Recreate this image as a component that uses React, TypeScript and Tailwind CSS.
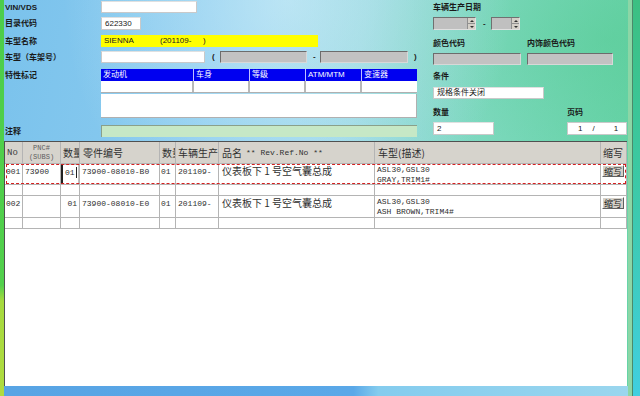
import React from "react";

const cols = "grid-cols-[18px_38px_19px_80px_16px_43px_156px_226px_26px]";

function Label({ children }: { children: React.ReactNode }) {
  return (
    <span className="block text-[8px] font-bold leading-[9px] text-[#1a1a1a] whitespace-nowrap">
      {children}
    </span>
  );
}

function WhiteBox({ w, h = "h-[12px]", children }: { w: string; h?: string; children?: React.ReactNode }) {
  return (
    <div
      className={`${w} ${h} flex items-center bg-white border border-[#c9c9c9] border-t-[#e0e0e0] pl-[3px] text-[8px] leading-none text-[#202020] whitespace-nowrap`}
    >
      {children}
    </div>
  );
}

function GrayBox({ w }: { w: string }) {
  return (
    <div className={`${w} h-[12px] bg-[#c2c2c2] border border-[#6c6c6c] border-b-[#d8d8d8] border-r-[#d8d8d8]`} />
  );
}

function Spinner({ w }: { w: string }) {
  return (
    <div className={`${w} h-[13px] flex bg-[#c0c0c0] border border-[#707070] border-b-[#e0e0e0] border-r-[#e0e0e0]`}>
      <div className="flex-1" />
      <div className="w-[8px] flex flex-col border-l border-[#909090]">
        <div className="flex-1 flex items-center justify-center bg-[#d4d0c8] border-b border-[#909090]">
          <div className="w-0 h-0 border-l-[2px] border-r-[2px] border-b-[2px] border-l-transparent border-r-transparent border-b-[#303030]" />
        </div>
        <div className="flex-1 flex items-center justify-center bg-[#d4d0c8]">
          <div className="w-0 h-0 border-l-[2px] border-r-[2px] border-t-[2px] border-l-transparent border-r-transparent border-t-[#303030]" />
        </div>
      </div>
    </div>
  );
}

function FormRow({ mt, h, top, label, children }: { mt: string; h: string; top?: boolean; label: string; children: React.ReactNode }) {
  return (
    <div className={`${mt} ${h} flex ${top ? "items-start" : "items-center"}`}>
      <div className={`w-[96px] ${top ? "pt-[2px]" : ""}`}>
        <Label>{label}</Label>
      </div>
      {children}
    </div>
  );
}

function SmallButton() {
  return (
    <div className="w-[22px] h-[12px] flex items-center justify-center bg-[#d4d0c8] border border-t-white border-l-white border-b-[#606060] border-r-[#606060] font-['Noto_Sans_CJK_SC',sans-serif] text-[9px] leading-none text-[#202020]">
      缩写
    </div>
  );
}

const cell = "border-r border-b border-[#b4b4b4] overflow-hidden whitespace-nowrap";
const mono = "font-['Liberation_Mono','Noto_Sans_CJK_SC',monospace] text-[8px] leading-[10px] text-[#303030]";
const cjk = "font-['Noto_Sans_CJK_SC',sans-serif] text-[10px] leading-[12px] text-[#303030]";

function Record({
  no,
  pnc,
  qty,
  editing,
  part,
  date,
  line1,
  line2,
  h,
}: {
  no: string;
  pnc: string;
  qty: string;
  editing?: boolean;
  part: string;
  date: string;
  line1: string;
  line2: string;
  h: string;
}) {
  return (
    <>
      <div className={`${cell} ${h} ${mono} pl-[1px] pt-[3px]`}>{no}</div>
      <div className={`${cell} ${h} ${mono} pl-[2px] pt-[3px]`}>{pnc}</div>
      <div className={`${cell} ${h} ${mono}`}>
        {editing ? (
          <div className="h-full flex items-start pt-[3px] pl-[2px] border-l-[2px] border-l-[#202020] border-t border-t-[#c0c0c0] border-r border-r-[#c0c0c0]">
            {qty}
            <span className="ml-[1px] mt-[-1px] w-px h-[11px] bg-[#202020]" />
          </div>
        ) : (
          <div className="pt-[3px] pr-[2px] text-right">{qty}</div>
        )}
      </div>
      <div className={`${cell} ${h} ${mono} pl-[2px] pt-[3px]`}>{part}</div>
      <div className={`${cell} ${h} ${mono} pl-[1px] pt-[3px]`}>01</div>
      <div className={`${cell} ${h} ${mono} pl-[2px] pt-[3px]`}>{date}</div>
      <div className={`${cell} ${h} ${cjk} pl-[3px] pt-[1px]`}>仪表板下 1 号空气囊总成</div>
      <div className={`${cell} ${h} ${mono} leading-[9px] pl-[2px] pt-[1px]`}>
        <div>{line1}</div>
        <div>{line2}</div>
      </div>
      <div className={`${cell} ${h} pl-[1px] pt-[1px]`}>
        <SmallButton />
      </div>
    </>
  );
}

function Spacer() {
  return (
    <>
      {Array.from({ length: 9 }).map((_, i) => (
        <div key={i} className={`${cell} h-[11px]`} />
      ))}
    </>
  );
}

export default function App() {
  return (
    <div className="w-[640px] h-[396px] overflow-hidden flex text-[8px] leading-none font-['Liberation_Sans','Noto_Sans_CJK_SC',sans-serif] bg-[radial-gradient(ellipse_at_45%_0%,rgba(215,242,250,0.6),transparent_45%),radial-gradient(ellipse_at_95%_10%,rgba(80,200,140,0.5),transparent_40%),linear-gradient(100deg,#7ac2ec_0%,#8acbef_30%,#9ad7ea_52%,#86dcc8_72%,#62d3a4_100%)]">
      {/* left edge strip */}
      <div className="w-[4px] h-full bg-[linear-gradient(180deg,#4ccd4a_0%,#52d04c_72%,#a6da3e_76%,#b0dc40_100%)]" />

      <div className="w-[624px] flex flex-col">
        {/* form */}
        <div className="h-[141px] flex">
          <div className="w-[429px] pl-[1px] flex flex-col">
            <FormRow mt="mt-[1px]" h="h-[12px]" label="VIN/VDS">
              <WhiteBox w="w-[96px]" />
            </FormRow>
            <FormRow mt="mt-[4px]" h="h-[13px]" label="目录代码">
              <WhiteBox w="w-[40px]" h="h-[13px]">622330</WhiteBox>
            </FormRow>
            <FormRow mt="mt-[5px]" h="h-[12px]" label="车型名称">
              <div className="w-[217px] h-[12px] flex items-center bg-[#ffff00] pl-[3px] text-[8px] leading-none text-[#202020] whitespace-nowrap">
                <span className="w-[56px]">SIENNA</span>
                <span className="w-[43px]">(201109-</span>
                <span>)</span>
              </div>
            </FormRow>
            <FormRow mt="mt-[4px]" h="h-[12px]" label="车型（车架号）">
              <WhiteBox w="w-[104px]" />
              <span className="ml-[7px] w-[8px] text-[8px] font-bold text-[#202020]">(</span>
              <GrayBox w="w-[87px]" />
              <span className="ml-[6px] w-[7px] text-[8px] font-bold text-[#202020]">-</span>
              <GrayBox w="w-[88px]" />
              <span className="ml-[6px] text-[8px] font-bold text-[#202020]">)</span>
            </FormRow>
            <FormRow mt="mt-[6px]" h="h-[49px]" top label="特性标记">
              <div className="w-[316px] flex flex-col">
                <div className="flex h-[12px] bg-[#0000f0] text-white text-[8px] leading-none">
                  {[
                    ["w-[93px]", "发动机"],
                    ["w-[56px]", "车身"],
                    ["w-[56px]", "等级"],
                    ["w-[56px]", "ATM/MTM"],
                    ["w-[55px]", "变速器"],
                  ].map(([w, t], i) => (
                    <div key={t} className={`${w} flex items-center pl-[2px] ${i < 4 ? "border-r border-[#c0c0ff]" : ""}`}>
                      {t}
                    </div>
                  ))}
                </div>
                <div className="flex h-[12px] bg-white border-b border-[#b0b0b0]">
                  {["w-[93px]", "w-[56px]", "w-[56px]", "w-[56px]", "w-[55px]"].map((w, i) => (
                    <div key={i} className={`${w} ${i < 4 ? "border-r-2 border-[#b8b8b8]" : ""}`} />
                  ))}
                </div>
                <div className="mt-[1px] h-[24px] bg-white border-r border-b border-[#b0b0b0]" />
              </div>
            </FormRow>
            <FormRow mt="mt-[7px]" h="h-[12px]" label="注释">
              <div className="w-[316px] h-[12px] bg-[#c6e8c6] border-l border-t border-[#8aa08a]" />
            </FormRow>
          </div>

          {/* right form */}
          <div className="flex-1 flex flex-col">
            <div className="h-[17px] pt-[3px]">
              <Label>车辆生产日期</Label>
            </div>
            <div className="h-[13px] flex items-center">
              <Spinner w="w-[43px]" />
              <span className="ml-[7px] w-[8px] text-[8px] font-bold text-[#202020]">-</span>
              <Spinner w="w-[29px]" />
            </div>
            <div className="h-[23px] pt-[9px] flex">
              <div className="w-[94px]">
                <Label>颜色代码</Label>
              </div>
              <Label>内饰颜色代码</Label>
            </div>
            <div className="flex gap-[6px]">
              <GrayBox w="w-[88px]" />
              <GrayBox w="w-[86px]" />
            </div>
            <div className="h-[22px] pt-[7px]">
              <Label>条件</Label>
            </div>
            <WhiteBox w="w-[111px]">规格条件关闭</WhiteBox>
            <div className="h-[23px] pt-[9px] flex">
              <div className="w-[134px]">
                <Label>数量</Label>
              </div>
              <Label>页码</Label>
            </div>
            <div className="flex h-[13px]">
              <WhiteBox w="w-[61px]" h="h-[13px]">2</WhiteBox>
              <div className="ml-[73px] w-[60px] h-[13px] flex items-center bg-white border border-[#c9c9c9] text-[8px] leading-none text-[#202020]">
                <span className="ml-[10px]">1</span>
                <span className="ml-[10px]">/</span>
                <span className="ml-[19px]">1</span>
              </div>
            </div>
          </div>
        </div>

        {/* parts table */}
        <div className="w-[623px] h-[245px] bg-white border-l border-t border-[#505050] relative">
          <div className={`grid ${cols}`}>
            <div className={`${cell} h-[22px] bg-[#d6d3cc] flex items-center pl-[2px] pt-[2px] font-['Liberation_Mono',monospace] text-[9px] text-[#404040]`}>No</div>
            <div className={`${cell} h-[22px] bg-[#d6d3cc] flex flex-col items-center justify-center font-['Liberation_Mono',monospace] text-[7px] leading-[9px] text-[#606060]`}>
              <span>PNC#</span>
              <span>(SUBS)</span>
            </div>
            <div className={`${cell} h-[22px] bg-[#d6d3cc] flex items-center pl-[2px] ${cjk}`}>数量</div>
            <div className={`${cell} h-[22px] bg-[#d6d3cc] flex items-center pl-[3px] ${cjk}`}>零件编号</div>
            <div className={`${cell} h-[22px] bg-[#d6d3cc] flex items-center pl-[2px] ${cjk}`}>数量</div>
            <div className={`${cell} h-[22px] bg-[#d6d3cc] flex items-center pl-[2px] ${cjk}`}>车辆生产日期</div>
            <div className={`${cell} h-[22px] bg-[#d6d3cc] flex items-center pl-[3px] ${cjk}`}>
              品名
              <span className="ml-[4px] font-['Liberation_Mono',monospace] text-[8px]">** Rev.Ref.No **</span>
            </div>
            <div className={`${cell} h-[22px] bg-[#d6d3cc] flex items-center pl-[3px] ${cjk}`}>车型(描述)</div>
            <div className={`${cell} h-[22px] bg-[#d6d3cc] flex items-center pl-[2px] ${cjk}`}>缩写</div>

            <Record no="001" pnc="73900" qty="01" editing part="73900-08010-B0" date="201109-" line1="ASL30,GSL30" line2="GRAY,TRIM1#" h="h-[21px]" />
            <Spacer />
            <Record no="002" pnc="" qty="01" part="73900-08010-E0" date="201109-" line1="ASL30,GSL30" line2="ASH BROWN,TRIM4#" h="h-[22px]" />
            <Spacer />
          </div>
          {/* focus rectangle on the selected row */}
          <div className="absolute left-[1px] top-[22px] w-[620px] h-[20px] border border-dashed border-[#d42020] pointer-events-none" />
        </div>

        {/* bottom strip */}
        <div className="h-[10px] bg-[linear-gradient(90deg,#58a4e4_0%,#5aa8e8_56%,#84ccee_60%,#9ad6ee_100%)]" />
      </div>

      {/* right edge */}
      <div className="flex-1 flex">
        <div className="w-[4px] bg-[#8cd6a6]" />
        <div className="w-px bg-[#4c8a6a]" />
        <div className="flex-1 bg-[linear-gradient(180deg,#3cbf82_0%,#3cc8a0_40%,#40cfe0_100%)]" />
      </div>
    </div>
  );
}
